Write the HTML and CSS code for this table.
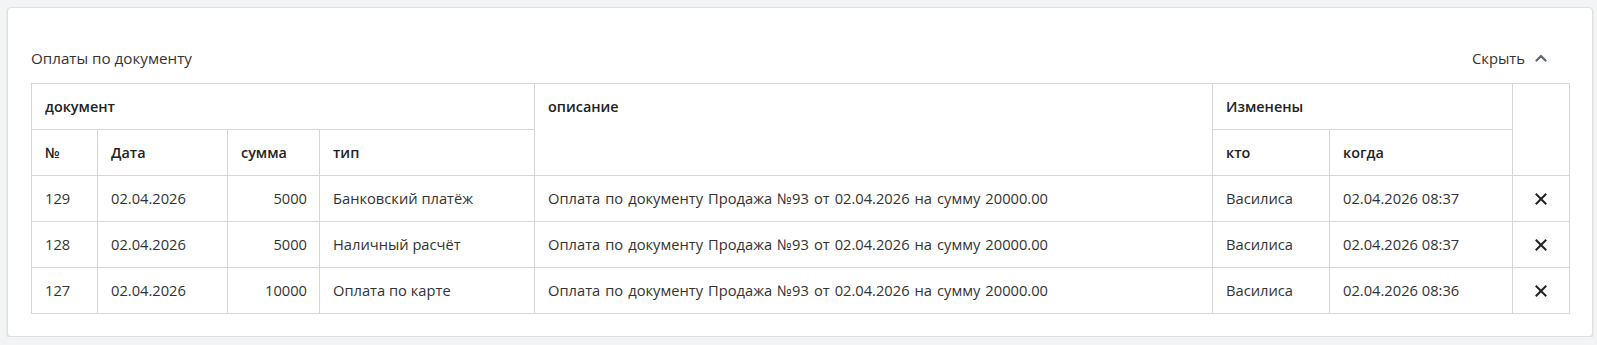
FILE: index.html
```html
<!DOCTYPE html>
<html lang="ru">
<head>
<meta charset="utf-8">
<title>Оплаты по документу</title>
<link rel="stylesheet" href="styles.css">
</head>
<body>
<div class="card">
  <div class="card-header">
    <span class="card-title">Оплаты по документу</span>
    <span class="toggle">Скрыть
      <svg class="chev" width="12" height="8" viewBox="0 0 12 8"><polyline points="1.5,6.5 6,2 10.5,6.5" fill="none" stroke="#5b6675" stroke-width="2.2" stroke-linecap="round" stroke-linejoin="round"/></svg>
    </span>
  </div>
  <table class="grid">
    <colgroup>
      <col class="c-num"><col class="c-date"><col class="c-sum"><col class="c-type"><col class="c-desc"><col class="c-who"><col class="c-when"><col class="c-act">
    </colgroup>
    <thead>
      <tr>
        <th colspan="4">документ</th>
        <th rowspan="2">описание</th>
        <th colspan="2">Изменены</th>
        <th rowspan="2"></th>
      </tr>
      <tr>
        <th>№</th><th>Дата</th><th>сумма</th><th>тип</th><th>кто</th><th>когда</th>
      </tr>
    </thead>
    <tbody>
      <tr>
        <td>129</td><td>02.04.2026</td><td class="num">5000</td><td>Банковский платёж</td>
        <td class="desc">Оплата по документу Продажа №93 от 02.04.2026 на сумму 20000.00</td>
        <td>Василиса</td><td>02.04.2026 08:37</td>
        <td class="act"><svg width="12" height="12" viewBox="0 0 12 12"><path d="M1.5 1.5 L10.5 10.5 M10.5 1.5 L1.5 10.5" stroke="#222" stroke-width="2" stroke-linecap="square"/></svg></td>
      </tr>
      <tr>
        <td>128</td><td>02.04.2026</td><td class="num">5000</td><td>Наличный расчёт</td>
        <td class="desc">Оплата по документу Продажа №93 от 02.04.2026 на сумму 20000.00</td>
        <td>Василиса</td><td>02.04.2026 08:37</td>
        <td class="act"><svg width="12" height="12" viewBox="0 0 12 12"><path d="M1.5 1.5 L10.5 10.5 M10.5 1.5 L1.5 10.5" stroke="#222" stroke-width="2" stroke-linecap="square"/></svg></td>
      </tr>
      <tr>
        <td>127</td><td>02.04.2026</td><td class="num">10000</td><td>Оплата по карте</td>
        <td class="desc">Оплата по документу Продажа №93 от 02.04.2026 на сумму 20000.00</td>
        <td>Василиса</td><td>02.04.2026 08:36</td>
        <td class="act"><svg width="12" height="12" viewBox="0 0 12 12"><path d="M1.5 1.5 L10.5 10.5 M10.5 1.5 L1.5 10.5" stroke="#222" stroke-width="2" stroke-linecap="square"/></svg></td>
      </tr>
    </tbody>
  </table>
</div>
</body>
</html>
```

FILE: styles.css
```css
html, body {
  margin: 0;
  padding: 0;
  background: #f3f4f6;
}
body {
  font-family: "Open Sans", "Noto Sans", "Liberation Sans", sans-serif;
  font-size: 14.7px;
  color: #333;
}
.card {
  margin: 7px 4px 0 7px;
  background: #fff;
  border: 1px solid #dedede;
  border-radius: 4px;
  box-shadow: 0 1px 2px rgba(0, 0, 0, 0.12);
  padding: 34px 23px 22px 23px;
}
.card-header {
  height: 32px;
  display: flex;
  align-items: center;
  justify-content: space-between;
  padding-right: 22px;
  margin-bottom: 9px;
}
.card-title {
  font-size: 15.2px;
  color: #333;
}
.toggle {
  display: flex;
  align-items: center;
  gap: 10px;
  font-size: 14.8px;
  color: #333;
}
.chev {
  display: block;
}
.grid {
  width: 1538px;
  border-collapse: collapse;
  table-layout: fixed;
}
.c-num { width: 66px; }
.c-date { width: 130px; }
.c-sum { width: 92px; }
.c-type { width: 215px; }
.c-desc { width: 678px; }
.c-who { width: 117px; }
.c-when { width: 183px; }
.c-act { width: 57px; }
.grid th, .grid td {
  border: 1px solid #d6d6d6;
  padding: 12px 12px 12px 13px;
  line-height: 21px;
  text-align: left;
  white-space: nowrap;
}
.grid th {
  font-size: 14.4px;
  font-weight: 600;
  color: #222;
  vertical-align: top;
}
.grid td {
  vertical-align: middle;
}
.grid td.desc {
  word-spacing: 1.2px;
}
.grid td.num {
  text-align: right;
}
.grid td.act {
  text-align: center;
  padding: 0;
}
.grid td.act svg {
  display: block;
  margin: 0 auto;
}
```
